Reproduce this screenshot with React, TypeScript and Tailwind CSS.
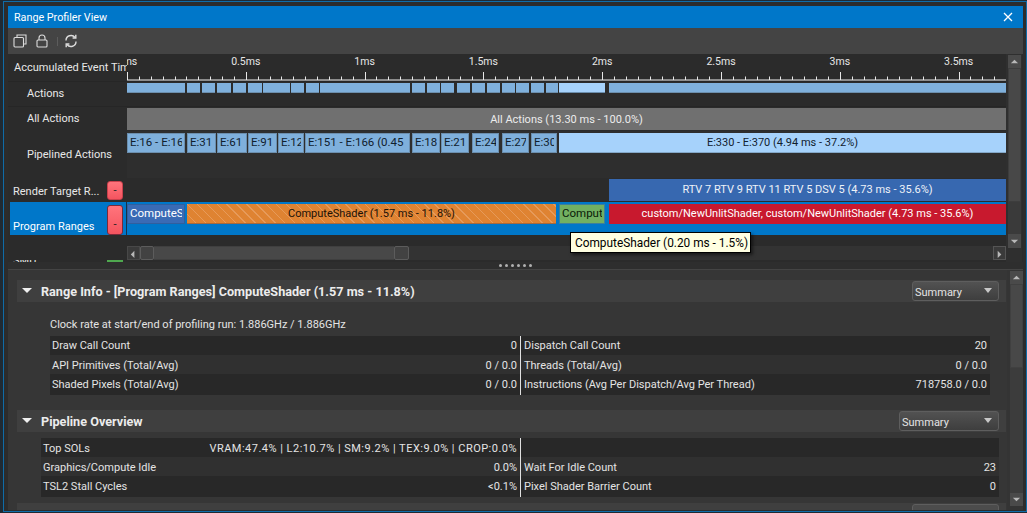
const font = "font-['Roboto',sans-serif]"

// timeline bars are [start, end] in page pixels, the track starts at x = 127
const actions: [number, number, string?][] = [
  [127, 185], [187, 200], [202, 215], [217, 231], [233, 246], [248, 262], [263, 277], [277, 290], [291, 304], [306, 319],
  [320, 410], [412, 425], [427, 440], [441, 454], [457, 470], [472, 485], [487, 500], [502, 515], [516, 529], [531, 544],
  [546, 558], [559, 605, 'light'], [609, 1006],
]

const pipelined: [number, number, string][] = [
  [127, 185, 'E:16 - E:16'], [187, 216, 'E:31'], [217, 247, 'E:61'], [248, 277, 'E:91'], [278, 304, 'E:121'],
  [305, 410, 'E:151 - E:166 (0.45'], [412, 440, 'E:181'], [441, 469, 'E:211'], [472, 499, 'E:241'],
  [502, 529, 'E:271'], [531, 557, 'E:301'],
]

const rulerLabels = [
  { x: 0, t: '0ms' }, { x: 118.8, t: '0.5ms' }, { x: 237.6, t: '1ms' }, { x: 356.4, t: '1.5ms' },
  { x: 475.2, t: '2ms' }, { x: 594, t: '2.5ms' }, { x: 712.8, t: '3ms' }, { x: 831.6, t: '3.5ms' },
]

const rangeInfo = [
  ['Draw Call Count', '0', 'Dispatch Call Count', '20'],
  ['API Primitives (Total/Avg)', '0 / 0.0', 'Threads (Total/Avg)', '0 / 0.0'],
  ['Shaded Pixels (Total/Avg)', '0 / 0.0', 'Instructions (Avg Per Dispatch/Avg Per Thread)', '718758.0 / 0.0'],
]

const pipeline = [
  ['Top SOLs', 'VRAM:47.4% | L2:10.7% | SM:9.2% | TEX:9.0% | CROP:0.0%', '', ''],
  ['Graphics/Compute Idle', '0.0%', 'Wait For Idle Count', '23'],
  ['TSL2 Stall Cycles', '<0.1%', 'Pixel Shader Barrier Count', '0'],
]

function Arrow({ dir }: { dir: 'up' | 'down' | 'left' | 'right' }) {
  const pts = { up: '1,6 9,6 5,2', down: '1,2 9,2 5,6', left: '6,1 6,9 2,5', right: '3,1 3,9 7,5' }[dir]
  return (
    <svg width="9" height="9" viewBox="0 0 10 8" className="text-[#b8b8b8]" fill="currentColor">
      <polygon points={pts} />
    </svg>
  )
}

function Ruler() {
  const ticks = Array.from({ length: 74 }, (_, i) => i)
  return (
    <div className="relative h-[27px] flex-1 overflow-hidden">
      {rulerLabels.map((l) => (
        <span key={l.t} className="absolute top-[1px] -translate-x-1/2 text-[10.5px] leading-[14px] text-[#e6e6e6]" style={{ left: l.x }}>
          {l.t}
        </span>
      ))}
      <svg width="879" height="27" className="absolute left-0 top-0">
        <rect x="0" y="25.5" width="879" height="1" fill="#f0f0f0" />
        {ticks.map((i) => {
          const x = Math.round(i * 11.88) + 0.5
          return <line key={i} x1={x} x2={x} y1={i % 10 === 0 ? 18 : 22.5} y2={26} stroke="#e8e8e8" strokeWidth="1" />
        })}
      </svg>
    </div>
  )
}

function Row({ h, label, indent = false, pad, children, className = '' }: { h: string; label: string; indent?: boolean; pad: string; children: React.ReactNode; className?: string }) {
  return (
    <div className={`flex shrink-0 ${h} ${className}`}>
      <div className={`flex w-[119px] shrink-0 items-center overflow-hidden whitespace-nowrap bg-[#2b2b2b] text-[#e8e8e8] ${pad} ${indent ? 'pl-[19px]' : 'pl-[6px]'}`}>
        {label}
      </div>
      {children}
    </div>
  )
}

// text is clipped a few pixels before the edge of the bar
function ClippedBar({ text, className, style }: { text: string; className: string; style?: React.CSSProperties }) {
  return (
    <div className={`h-[20px] shrink-0 whitespace-nowrap border px-[2px] leading-[16px] ${className}`} style={style}>
      <div className="overflow-hidden">{text}</div>
    </div>
  )
}

function DataTable({ rows, left, width, split, shifted }: { rows: string[][]; left: string; width: string; split: string; shifted: number[] }) {
  return (
    <div className={`${left} ${width}`}>
      {rows.map((r, i) => (
        <div key={r[0]} className={`flex ${i === 2 ? 'h-[21px]' : 'h-[19px]'} items-center whitespace-nowrap text-[#e4e4e4] ${i === 1 ? 'bg-[#303030]' : 'bg-[#282828]'}`}>
          <div className={`flex ${split} h-full shrink-0 items-center justify-between border-r border-[#e0e0e0] pl-[2px] pr-[3px] ${shifted.includes(i) ? 'pt-[2px]' : ''}`}>
            <span>{r[0]}</span>
            <span className={r[1].length > 20 ? 'tracking-[0.48px]' : ''}>{r[1]}</span>
          </div>
          <div className={`flex h-full flex-1 items-center justify-between pl-[3px] pr-[3px] ${shifted.includes(i) ? 'pt-[2px]' : ''}`}>
            <span>{r[2]}</span>
            <span>{r[3]}</span>
          </div>
        </div>
      ))}
    </div>
  )
}

function Dropdown({ w }: { w: string }) {
  return (
    <div className={`flex h-[20px] ${w} mr-[7px] items-center justify-between rounded-[3px] border border-[#5e5e5e] bg-gradient-to-b from-[#525252] to-[#3e3e3e] pl-[2px] pr-[5px] text-[#e4e4e4]`}>
      <span className="pt-[3px]">Summary</span>
      <svg width="10" height="6" viewBox="0 0 10 6" fill="#c8c8c8">
        <polygon points="1,0 9,0 5,5" />
      </svg>
    </div>
  )
}

function SectionHeader({ title, children }: { title: string; children: React.ReactNode }) {
  return (
    <div className="flex h-[22px] items-center bg-[#3f3f3f] pl-[5px]">
      <svg width="10" height="6" viewBox="0 0 10 6" fill="#f0f0f0" className="shrink-0">
        <polygon points="0,0 10,0 5,5" />
      </svg>
      <span className="ml-[9px] whitespace-nowrap pt-[1px] text-[12.65px] font-bold text-[#ececec]">{title}</span>
      <div className="flex-1" />
      {children}
    </div>
  )
}

export default function App() {
  return (
    <div className={`h-[513px] w-[1027px] overflow-hidden bg-[#1f2a33] pl-[3px] pt-[1px] text-[11px] leading-[14px] ${font}`}>
      <div className="flex h-[511px] w-[1024px] flex-col border border-[#0f6ca8] bg-[#2c2c2c] pb-[1px] pl-[4px] pr-[3px] pt-[4px]">
        {/* title bar */}
        <div className="flex h-[22px] shrink-0 items-center justify-between bg-[#0077c9] pl-[6px] pr-[10px] text-white">
          <span className="pt-[1px] text-[10.75px]">Range Profiler View</span>
          <svg width="10" height="10" viewBox="0 0 10 10" stroke="#fff" strokeWidth="1.3">
            <path d="M1 1 L9 9 M9 1 L1 9" />
          </svg>
        </div>

        {/* toolbar */}
        <div className="flex h-[26px] shrink-0 items-center bg-[#444444] pl-[5px] text-[#dcdcdc]">
          <svg width="14" height="14" viewBox="0 0 14 14" fill="none" stroke="currentColor" strokeWidth="1.1">
            <path d="M4 3 V1 H13 V10 H11" />
            <rect x="1" y="3.5" width="9.5" height="9.5" rx="1" />
          </svg>
          <svg width="12" height="14" viewBox="0 0 12 14" fill="none" stroke="currentColor" strokeWidth="1.1" className="ml-[9px]">
            <rect x="1" y="6" width="10" height="7" rx="1" />
            <path d="M3 6 V4 a3 3 0 0 1 6 0 V6" />
          </svg>
          <div className="ml-[9px] h-[9px] w-px bg-[#5c5c5c]" />
          <svg width="14" height="14" viewBox="0 0 14 14" fill="none" stroke="currentColor" strokeWidth="1.4" className="ml-[6px]">
            <path d="M2 6.5 A5 5 0 0 1 11 3.5" />
            <path d="M12 7.5 A5 5 0 0 1 3 10.5" />
            <path d="M11.8 0.8 V4 H8.6" />
            <path d="M2.2 13.2 V10 H5.4" />
          </svg>
        </div>

        {/* timeline */}
        <div className="flex h-[208px] shrink-0 overflow-hidden bg-[#2b2b2b]">
          <div className="flex w-[998px] flex-col">
            <Row h="h-[27px]" label="Accumulated Event Time" pad="pt-[1px]">
              <Ruler />
            </Row>
            <Row h="h-[25px]" label="Actions" indent pad="pb-[1px]" className="border-t border-[#262626]">
              <div className="flex flex-1 pt-[1px]">
                {actions.map(([a, b, kind], i) => (
                  <div
                    key={a}
                    className={`h-[10px] border-b border-[#6c8fae] ${kind ? 'bg-[#a6d2fb]' : 'bg-[#7fb0dc]'}`}
                    style={{ width: b - a, marginLeft: i === 0 ? 0 : a - actions[i - 1][1] }}
                  />
                ))}
              </div>
            </Row>
            <Row h="h-[25px]" label="All Actions" indent pad="pb-[1px]" className="border-t border-[#262626]">
              <div className="flex-1 pt-[1px]">
                <div className="flex h-[22px] items-center justify-center bg-[#707070] pt-[1px] text-[#ececec]">All Actions (13.30 ms - 100.0%)</div>
              </div>
            </Row>
            <Row h="h-[47px]" label="Pipelined Actions" indent pad="pt-[1px]">
              <div className="flex flex-1 bg-[#2e2e2e] pt-[2px]">
                {pipelined.map(([a, b, t], i) => (
                  <ClippedBar
                    key={a}
                    text={t}
                    className="border-[#6c8fae] bg-[#7fb0dc] text-[11.5px] text-[#10202e]"
                    style={{ width: b - a, marginLeft: i === 0 ? 0 : a - pipelined[i - 1][1] }}
                  />
                ))}
                <div className="ml-[2px] flex h-[20px] flex-1 items-center justify-center border-b border-[#84a8c8] bg-[#a6d2fb] text-[#10202e]">
                  E:330 - E:370 (4.94 ms - 37.2%)
                </div>
              </div>
            </Row>
            <div className="flex h-[24px] shrink-0 bg-[#2b2b2b]">
              <div className="flex w-[99px] shrink-0 items-center overflow-hidden whitespace-nowrap pl-[5px] pt-[3px] text-[#e8e8e8]">Render Target R...</div>
              <div className="mt-[3px] flex h-[19px] w-[16px] shrink-0 items-center justify-center rounded-[3px] border border-[#c9414d] bg-gradient-to-b from-[#ff747c] to-[#f4545f] text-[#222]">-</div>
              <div className="flex flex-1 pl-[486px] pt-[1px]">
                <div className="flex h-[22px] flex-1 items-center justify-center bg-[#3768b0] text-[#eef2f8]">
                  RTV 7 RTV 9 RTV 11 RTV 5 DSV 5 (4.73 ms - 35.6%)
                </div>
              </div>
            </div>
            <div className="ml-[2px] flex h-[33px] shrink-0 bg-[#0077c9] text-white">
              <div className="flex w-[97px] shrink-0 items-end overflow-hidden whitespace-nowrap pb-[1px] pl-[3px]">Program Ranges</div>
              <div className="mt-[3px] flex h-[30px] w-[16px] shrink-0 items-end justify-center rounded-[3px] border border-[#7a2a3a] bg-gradient-to-b from-[#ff747c] to-[#f4545f] pb-[2px] text-[#222]">-</div>
              <div className="ml-[3px] w-px bg-[#17324a]" />
              <div className="flex flex-1 pt-[2px]">
                <ClippedBar text="ComputeShader" className="w-[58px] border-[#2f5f9f] bg-[#3a6bb5] text-[11.5px]" />
                <div className="ml-[2px] flex h-[20px] w-[369px] items-center justify-center border-b border-[#a8683a] bg-[#df8332] bg-[repeating-linear-gradient(45deg,#df8332_0px,#df8332_6px,#e69a5a_6px,#e69a5a_7px)] text-[#1c1208]">
                  ComputeShader (1.57 ms - 11.8%)
                </div>
                <ClippedBar text="ComputeShader" className="ml-[3px] w-[46px] border-[#3e7f9a] bg-[#72b062] text-[11.5px] text-[#0a1a08]" />
                <div className="ml-[4px] flex h-[20px] flex-1 items-center justify-center bg-[#c8192e]">
                  custom/NewUnlitShader, custom/NewUnlitShader (4.73 ms - 35.6%)
                </div>
              </div>
            </div>
            {/* horizontal scrollbar */}
            <div className="flex h-[25px] shrink-0 pl-[119px] pt-[11px]">
              <div className="flex h-[14px] flex-1 bg-[#333333]">
                <div className="flex w-[13px] items-center justify-center border border-[#484848] bg-[#3a3a3a]">
                  <Arrow dir="left" />
                </div>
                <div className="w-[14px] rounded-[2px] border border-[#5c5c5c] bg-[#424242]" />
                <div className="w-[240px] border-y border-[#3f3f3f] bg-[#484848]" />
                <div className="w-[15px] rounded-[2px] border border-[#5c5c5c] bg-[#424242]" />
                <div className="flex-1" />
                <div className="flex w-[13px] items-center justify-center border border-[#555] bg-[#3a3a3a]">
                  <Arrow dir="right" />
                </div>
              </div>
            </div>
            <div className="flex h-[2px] shrink-0 overflow-hidden">
              <div className="w-[99px] shrink-0 whitespace-nowrap pl-[5px] text-[#e8e8e8]">
                <span className="relative -top-[6px]">SMU</span>
              </div>
              <div className="h-[2px] w-[16px] bg-[#4fa84f]" />
            </div>
          </div>
          {/* vertical scrollbar */}
          <div className="flex w-[16px] flex-col bg-[#2f2f2f] pb-[14px] pl-[2px] pr-[1px] pt-[1px]">
            <div className="flex h-[13px] shrink-0 items-center justify-center bg-[#4a4a4a]">
              <Arrow dir="up" />
            </div>
            <div className="h-[134px] shrink-0 border border-[#3d3d3d] bg-[#484848]" />
            <div className="flex-1 bg-[#3a3a3a]" />
            <div className="flex h-[14px] shrink-0 items-center justify-center bg-[#4a4a4a]">
              <Arrow dir="down" />
            </div>
          </div>
        </div>

        {/* splitter */}
        <div className="flex h-[8px] shrink-0 items-center justify-center gap-[3px] border-b border-[#444] bg-[#2e2e2e]">
          {[0, 1, 2, 3, 4, 5].map((d) => (
            <div key={d} className="h-[3px] w-[3px] rounded-full bg-[#b0b0b0]" />
          ))}
        </div>

        {/* details */}
        <div className="flex min-h-0 flex-1 overflow-hidden bg-[#363636]">
          <div className="flex-1 overflow-hidden pl-[9px] pr-[1px] pt-[10px]">
            <SectionHeader title="Range Info - [Program Ranges] ComputeShader (1.57 ms - 11.8%)">
              <Dropdown w="w-[87px]" />
            </SectionHeader>
            <div className="pl-[33px] pt-[16px] text-[#e4e4e4]">Clock rate at start/end of profiling run: 1.886GHz / 1.886GHz</div>
            <div className="pt-[4px]">
              <DataTable rows={rangeInfo} left="ml-[33px]" width="w-[940px]" split="w-[471px]" shifted={[1]} />
            </div>
            <div className="mt-[15px]">
              <SectionHeader title="Pipeline Overview">
                <Dropdown w="w-[100px]" />
              </SectionHeader>
            </div>
            <div className="pt-[6px]">
              <DataTable rows={pipeline} left="ml-[24px]" width="w-[958px]" split="w-[480px]" shifted={[0, 1]} />
            </div>
            <div className="mt-[6px] flex h-[22px] justify-end bg-[#3f3f3f] pr-[7px] pt-[1px]">
              <div className="h-[20px] w-[87px] rounded-[3px] border border-[#5e5e5e] bg-[#4c4c4c]" />
            </div>
          </div>
          <div className="flex w-[16px] shrink-0 flex-col bg-[#343434] pb-[4px] pl-[3px] pt-[1px]">
            <div className="flex h-[13px] shrink-0 items-center justify-center bg-[#4a4a4a]">
              <Arrow dir="up" />
            </div>
            <div className="h-[84px] shrink-0 border border-[#404040] bg-[#484848]" />
            <div className="flex-1 bg-[#3c3c3c]" />
            <div className="flex h-[13px] shrink-0 items-center justify-center bg-[#4a4a4a]">
              <Arrow dir="down" />
            </div>
          </div>
        </div>
      </div>

      {/* tooltip */}
      <div className="absolute left-[570px] top-[232px] flex h-[21px] w-[181px] items-center whitespace-nowrap border border-black bg-[#ffffe1] pl-[4px] text-[11.85px] text-black shadow-[2px_2px_3px_rgba(0,0,0,0.5)]">
        ComputeShader (0.20 ms - 1.5%)
      </div>
    </div>
  )
}
